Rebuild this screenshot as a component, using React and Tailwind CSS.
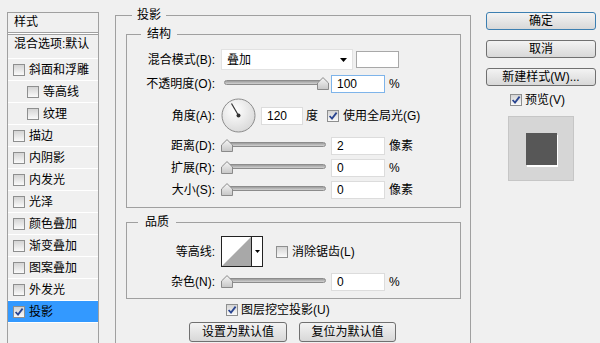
import React from "react";

function Check({ checked }) {
  return (
    <span className="inline-flex w-[12px] h-[12px] shrink-0 items-center justify-center border border-[#8e8f8f] bg-linear-to-b from-[#d4d4d4] to-[#fafafa]">
      {checked && (
        <svg width="10" height="10" viewBox="0 0 10 10">
          <path d="M1.6 5 L4 7.6 L8.6 1.6" fill="none" stroke="#2a4590" strokeWidth="1.8" />
        </svg>
      )}
    </span>
  );
}

function Thumb() {
  return (
    <svg width="12" height="13" viewBox="0 0 12 13">
      <defs>
        <linearGradient id="thumbg" x1="0" y1="0" x2="0" y2="1">
          <stop offset="0" stopColor="#f6f6f6" />
          <stop offset="1" stopColor="#c6c6c6" />
        </linearGradient>
      </defs>
      <path d="M0.5 6 L6 0.6 L11.5 6 L11.5 12.5 L0.5 12.5 Z" fill="url(#thumbg)" stroke="#8a8a8a" strokeLinejoin="round" />
    </svg>
  );
}

function Slider({ full }) {
  return (
    <div className="relative w-[110px] h-[18px] shrink-0">
      <div className="ml-[3px] mt-[5px] w-[102px] h-[5px] rounded-full border border-[#8c8c8c] bg-linear-to-b from-[#9c9c9c] to-[#d2d2d2]" />
      <div className={`absolute top-[2px] ${full ? "left-[96px]" : "left-[0px]"}`}>
        <Thumb />
      </div>
    </div>
  );
}

function Field({ value, focus, w }) {
  return (
    <div
      className={`${w || "w-[54px]"} h-[18px] shrink-0 bg-white border ${
        focus ? "border-[#7eb4ea]" : "border-[#dcdcdc]"
      } pl-[5px] leading-[16px]`}
    >
      {value}
    </div>
  );
}

function Label({ children }) {
  return <div className="w-[94px] shrink-0 text-right pr-[6px] leading-[14px]">{children}</div>;
}

function Btn({ children, primary, className }) {
  return (
    <div
      className={`flex items-center justify-center rounded-[3px] border ${
        primary ? "border-[#3c7fb1]" : "border-[#707070]"
      } bg-linear-to-b from-[#f3f3f3] to-[#d8d8d8] leading-[14px] ${className}`}
    >
      {children}
    </div>
  );
}

const items = [
  ["斜面和浮雕", false, false],
  ["等高线", true, false],
  ["纹理", true, false],
  ["描边", false, false],
  ["内阴影", false, false],
  ["内发光", false, false],
  ["光泽", false, false],
  ["颜色叠加", false, false],
  ["渐变叠加", false, false],
  ["图案叠加", false, false],
  ["外发光", false, false],
  ["投影", false, true],
];

export default function App() {
  return (
    <div className="w-[600px] h-[343px] overflow-hidden bg-[#f0f0f0] flex items-start text-[12px] text-black font-['Liberation_Sans','Noto_Sans_CJK_SC',sans-serif]">
      {/* Left styles list */}
      <div className="ml-[7px] mt-[12px] w-[92px] h-[340px] shrink-0 border border-[#a0a0a0]">
        <div className="h-[19px] pl-[6px] leading-[19px]">样式</div>
        <div className="h-[3px] border-y border-[#a0a0a0] bg-white" />
        <div className="h-[19px] pl-[6px] leading-[19px]">混合选项:默认</div>
        <div className="h-[5px] border-b border-white" />
        {items.map(([t, indent, sel]) => (
          <div
            key={t}
            className={`flex items-center h-[22px] border-b border-white ${sel ? "bg-[#3399ff]" : ""} ${
              indent ? "pl-[19px]" : "pl-[5px]"
            }`}
          >
            <Check checked={sel} />
            <span className="ml-[4px] leading-[14px]">{t}</span>
          </div>
        ))}
      </div>

      {/* Main fieldset */}
      <fieldset className="ml-[16px] mt-[8px] w-[356px] h-[360px] shrink-0 border border-[#a0a0a0]">
        <legend className="ml-[16px] px-[5px] leading-[14px]">投影</legend>
        <div className="pl-[10px] pr-[9px]">
          <fieldset className="mt-[5px] border border-[#a0a0a0] pb-[8px]">
            <legend className="ml-[14px] px-[6px] leading-[14px]">结构</legend>
            {/* Blend mode */}
            <div className="flex items-center h-[21px] mt-[8px]">
              <Label>混合模式(B):</Label>
              <div className="w-[132px] h-[21px] bg-white border border-[#e2e2e2] flex items-center pl-[5px] pr-[5px] justify-between">
                <span className="leading-[14px]">叠加</span>
                <svg width="7" height="4" viewBox="0 0 7 4">
                  <path d="M0 0 L7 0 L3.5 4 Z" fill="#000" />
                </svg>
              </div>
              <div className="ml-[3px] w-[43px] h-[17px] bg-white border border-[#a8a8a8]" />
            </div>
            {/* Opacity */}
            <div className="flex items-center h-[18px] mt-[5px]">
              <Label>不透明度(O):</Label>
              <Slider full />
              <Field value="100" focus />
              <span className="ml-[4px] leading-[14px]">%</span>
            </div>
            {/* Angle */}
            <div className="flex items-center h-[35px] mt-[5px]">
              <Label>角度(A):</Label>
              <svg width="35" height="35" viewBox="0 0 35 35" className="shrink-0">
                <defs>
                  <radialGradient id="dialg" cx="0.4" cy="0.35" r="0.7">
                    <stop offset="0" stopColor="#ffffff" />
                    <stop offset="1" stopColor="#d8d8d8" />
                  </radialGradient>
                </defs>
                <circle cx="17.5" cy="17.5" r="16.5" fill="url(#dialg)" stroke="#8c8c8c" />
                <line x1="17.5" y1="17.5" x2="10.5" y2="5.5" stroke="#333" strokeWidth="1.2" />
                <circle cx="17.5" cy="17.5" r="2" fill="#333" />
              </svg>
              <div className="ml-[5px]">
                <Field value="120" w="w-[42px]" />
              </div>
              <span className="ml-[3px] leading-[14px]">度</span>
              <div className="ml-[9px] flex items-center">
                <Check checked />
                <span className="ml-[4px] leading-[14px]">使用全局光(G)</span>
              </div>
            </div>
            {/* Distance */}
            <div className="flex items-center h-[18px] mt-[4px]">
              <Label>距离(D):</Label>
              <Slider />
              <Field value="2" />
              <span className="ml-[4px] leading-[14px]">像素</span>
            </div>
            <div className="flex items-center h-[18px] mt-[4px]">
              <Label>扩展(R):</Label>
              <Slider />
              <Field value="0" />
              <span className="ml-[4px] leading-[14px]">%</span>
            </div>
            <div className="flex items-center h-[18px] mt-[4px]">
              <Label>大小(S):</Label>
              <Slider />
              <Field value="0" />
              <span className="ml-[4px] leading-[14px]">像素</span>
            </div>
          </fieldset>

          <fieldset className="mt-[7px] border border-[#a0a0a0] pb-[7px]">
            <legend className="ml-[11px] px-[7px] leading-[14px]">品质</legend>
            <div className="flex items-center h-[31px] mt-[7px]">
              <Label>等高线:</Label>
              <div className="w-[42px] h-[31px] shrink-0 border border-[#222] bg-white flex">
                <svg width="29" height="29" viewBox="0 0 29 29" className="shrink-0">
                  <path d="M0 29 L29 0 L29 29 Z" fill="#a8a8a8" />
                </svg>
                <div className="flex-1 border-l border-[#222] flex items-center justify-center">
                  <svg width="5" height="3" viewBox="0 0 5 3">
                    <path d="M0 0 L5 0 L2.5 3 Z" fill="#000" />
                  </svg>
                </div>
              </div>
              <div className="ml-[13px] flex items-center">
                <Check />
                <span className="ml-[4px] leading-[14px]">消除锯齿(L)</span>
              </div>
            </div>
            <div className="flex items-center h-[18px] mt-[6px]">
              <Label>杂色(N):</Label>
              <Slider />
              <Field value="0" />
              <span className="ml-[4px] leading-[14px]">%</span>
            </div>
          </fieldset>

          <div className="flex items-center h-[14px] mt-[4px] ml-[100px]">
            <Check checked />
            <span className="ml-[3px] leading-[14px]">图层挖空投影(U)</span>
          </div>
          <div className="flex mt-[5px] pl-[63px] gap-[12px]">
            <Btn className="w-[98px] h-[20px]">设置为默认值</Btn>
            <Btn className="w-[97px] h-[20px]">复位为默认值</Btn>
          </div>
        </div>
      </fieldset>

      {/* Right column */}
      <div className="ml-[15px] mt-[12px] w-[110px] shrink-0 flex flex-col">
        <Btn primary className="h-[18px]">确定</Btn>
        <Btn className="h-[18px] mt-[10px]">取消</Btn>
        <Btn className="h-[18px] mt-[10px]">新建样式(W)...</Btn>
        <div className="flex items-center h-[13px] mt-[7px] pl-[24px]">
          <Check checked />
          <span className="ml-[3px] leading-[14px]">预览(V)</span>
        </div>
        <div className="ml-[22px] mt-[10px] w-[66px] h-[65px] border border-[#c6c6c6] bg-[#d6d6d6] flex items-center justify-center">
          <div className="w-[31px] h-[32px] bg-[#575757] shadow-[1px_2px_0_#ffffff]" />
        </div>
      </div>
    </div>
  );
}
